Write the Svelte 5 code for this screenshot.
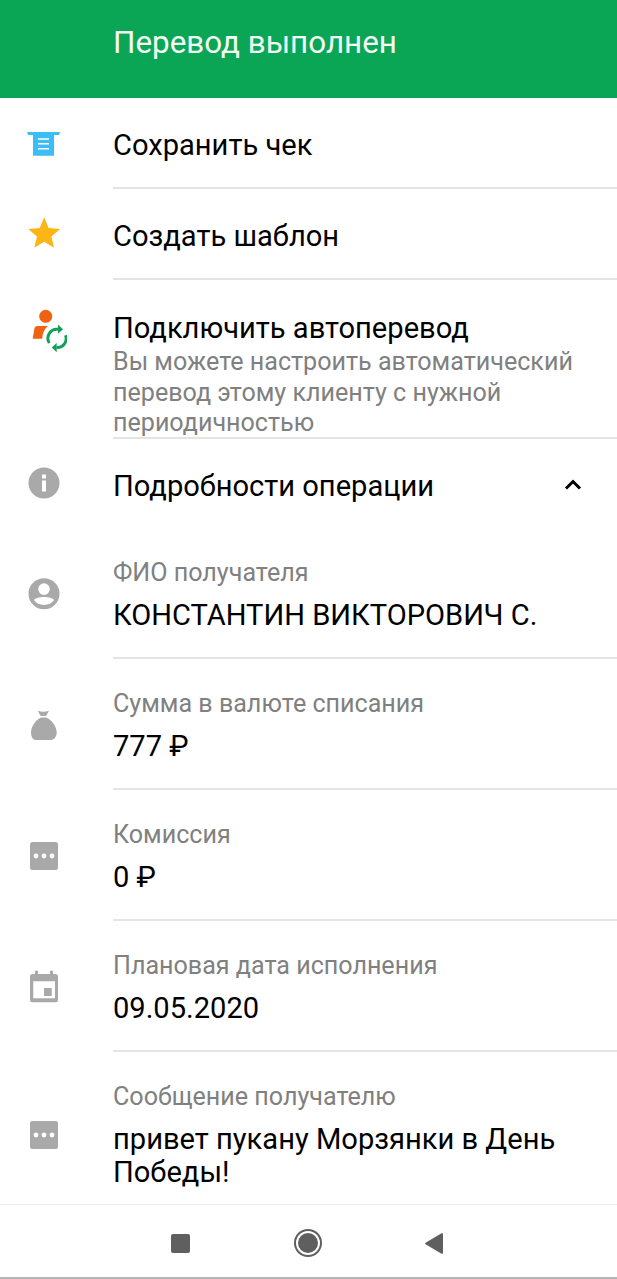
<script>
	const details = [
		{ label: 'ФИО получателя', value: 'КОНСТАНТИН ВИКТОРОВИЧ С.', icon: 'person' },
		{ label: 'Сумма в валюте списания', value: '777 ₽', icon: 'bag' },
		{ label: 'Комиссия', value: '0 ₽', icon: 'dots' },
		{ label: 'Плановая дата исполнения', value: '09.05.2020', icon: 'calendar' },
		{ label: 'Сообщение получателю', value: 'привет пукану Морзянки в День Победы!', icon: 'dots' }
	];
</script>

{#snippet icon(name)}
	<svg class="icon" viewBox="0 0 36 36" width="36" height="36" aria-hidden="true">
		{#if name === 'person'}
			<path fill="#a9a9a9" fill-rule="evenodd" d="M18 2.300a15.500 15.500 0 1 0 0 31 15.500 15.500 0 0 0 0-31zM18 7.300a5.800 5.800 0 1 1 0 11.600 5.800 5.800 0 0 1 0-11.600zM18 21c4.600 0 8.700 1.100 10.200 3.100C26 27.300 22.300 29 18 29S10 27.300 7.800 24.100C9.300 22.100 13.400 21 18 21z" />
		{:else if name === 'bag'}
			<path fill="#a9a9a9" d="M11.700 3.700q5.600 2 11.300 0l-3 5.300h-5.300zM15 10.500h5c6 2.500 10.700 9 10.700 15 0 5-3.500 7.500-6 7.500h-14.700c-2.500 0-5-2.500-5-7.500 0-6 4.700-12.500 10-15z" />
		{:else if name === 'dots'}
			<rect x="4" y="4" width="28" height="28" rx="2.500" fill="#a9a9a9" />
			<circle cx="10" cy="18" r="2.400" fill="#fff" />
			<circle cx="18" cy="18" r="2.400" fill="#fff" />
			<circle cx="26" cy="18" r="2.400" fill="#fff" />
		{:else if name === 'calendar'}
			<path fill="#a9a9a9" fill-rule="evenodd" d="M9 1.700h3V5h12V1.700h3V5h2.500A2.500 2.500 0 0 1 32 7.500v23.300a2.500 2.500 0 0 1-2.500 2.500h-23A2.500 2.500 0 0 1 4 30.800V7.500A2.500 2.500 0 0 1 6.500 5H9zM7.300 12.300v17h21.700v-17z" />
			<rect x="18" y="19" width="7.700" height="8" fill="#a9a9a9" />
		{/if}
	</svg>
{/snippet}

<div class="screen">
	<header class="topbar">Перевод выполнен</header>

	<main class="content">
		<div class="row action">
			<div class="slot">
				<svg class="icon" viewBox="0 0 36 36" width="36" height="36" aria-hidden="true">
					<path fill="#3dbdf5" d="M1 6h33l-1 3h-5v20.700H7V9H2z" />
					<path stroke="#fff" stroke-width="1.500" d="M12 13h11M12 17.700h11M12 22.700h11" />
				</svg>
			</div>
			<div class="body line"><span class="title">Сохранить чек</span></div>
		</div>

		<div class="row action">
			<div class="slot">
				<svg class="icon" viewBox="0 0 36 36" width="36" height="36" aria-hidden="true">
					<path fill="#fbb615" transform="translate(-0.900 -2.900) scale(1.590 1.600)" d="M12 17.270 18.180 21l-1.640-7.030L22 9.240l-7.190-.61L12 2 9.190 8.630 2 9.240l5.460 4.730L5.820 21z" />
				</svg>
			</div>
			<div class="body line"><span class="title">Создать шаблон</span></div>
		</div>

		<div class="row auto">
			<div class="slot">
				<svg class="icon" viewBox="0 0 46 44" width="46" height="44" aria-hidden="true">
					<circle cx="24.700" cy="7.300" r="6.500" fill="#ef6214" />
					<path fill="#ef6214" d="M13.500 19c.5-1.300 1.500-2 3-2h10.500c-3.500 2.500-5.500 7-5.800 12.700h-9.500z" />
					<path fill="none" stroke="#14a05a" stroke-width="3" d="M28.300 34A9 9 0 0 1 37 20.300M44.500 26.300A9 9 0 0 1 35.700 38.600" />
					<path fill="#14a05a" d="M37 15.600l5 4.700-5 4.500zM35.700 34l-5 4.600 5 4.600z" />
				</svg>
			</div>
			<div class="body line">
				<span class="title">Подключить автоперевод</span>
				<p class="hint">Вы можете настроить автоматический перевод этому клиенту с нужной периодичностью</p>
			</div>
		</div>

		<div class="row summary">
			<div class="slot">
				<svg class="icon" viewBox="0 0 36 36" width="36" height="36" aria-hidden="true">
					<circle cx="18" cy="18" r="15.500" fill="#a9a9a9" />
					<rect x="16" y="9.500" width="4" height="4" fill="#fff" />
					<rect x="16" y="15.500" width="4" height="11" fill="#fff" />
				</svg>
			</div>
			<div class="body">
				<span class="title">Подробности операции</span>
				<svg class="chevron" viewBox="0 0 18 12" width="18" height="12" aria-hidden="true">
					<path fill="none" stroke="#000" stroke-width="3" d="M2 10.500l7-7 7 7" />
				</svg>
			</div>
		</div>

		{#each details as item, i}
			<div class="row detail">
				<div class="slot">{@render icon(item.icon)}</div>
				<div class="body" class:line={i < details.length - 1} class:tall={i === details.length - 1}>
					<span class="label">{item.label}</span>
					<span class="value">{item.value}</span>
				</div>
			</div>
		{/each}
	</main>

	<nav class="navbar">
		<span class="nav-square"></span>
		<span class="nav-circle"></span>
		<svg viewBox="0 0 18 21" width="18" height="21" aria-hidden="true">
			<path fill="#5f5f5f" d="M18 1.200v18.600a1 1 0 0 1-1.500.9L.6 11.300a1 1 0 0 1 0-1.600L16.500.3a1 1 0 0 1 1.500.9z" />
		</svg>
	</nav>
</div>

<style>
	:global(body) {
		margin: 0;
		background: #fff;
	}

	.screen {
		width: 617px;
		height: 1279px;
		display: flex;
		flex-direction: column;
		overflow: hidden;
		font-family: Roboto, 'Liberation Sans', sans-serif;
		color: #000;
	}

	.topbar {
		height: 98px;
		flex-shrink: 0;
		box-sizing: border-box;
		padding: 21px 0 0 113px;
		background: #0aa655;
		color: #f2fbf6;
		font-size: 31.400px;
		line-height: 44px;
	}

	.content {
		flex: 1;
		min-height: 0;
		overflow: hidden;
	}

	.row {
		display: flex;
	}

	.slot {
		width: 113px;
		flex-shrink: 0;
		display: flex;
		justify-content: center;
		padding-right: 25px;
		box-sizing: border-box;
	}

	.icon {
		flex-shrink: 0;
	}

	.body {
		flex: 1;
		min-width: 0;
		box-sizing: border-box;
	}

	.line {
		border-bottom: 2px solid #e4e4e4;
	}

	.title {
		display: block;
		font-size: 29.100px;
		line-height: 36px;
	}

	.action .slot {
		padding-top: 28px;
	}

	.action .body {
		height: 91px;
		padding-top: 29px;
	}

	.auto .slot {
		padding-top: 29px;
	}

	.auto .body {
		height: 159px;
		padding: 30px 30px 0 0;
	}

	.hint {
		margin: 1px 0 0;
		font-size: 25.100px;
		line-height: 30.500px;
		color: #808080;
	}

	.summary {
		height: 89px;
	}

	.summary .slot {
		padding-top: 26px;
	}

	.summary .body {
		display: flex;
		justify-content: space-between;
		padding: 29px 35px 0 0;
	}

	.chevron {
		margin-top: 10px;
	}

	.detail {
		align-items: center;
	}

	.detail .body {
		height: 131px;
		padding: 29px 30px 0 0;
	}

	.detail .body.tall {
		height: 166px;
	}

	.label {
		display: block;
		font-size: 25.100px;
		line-height: 32px;
		color: #808080;
	}

	.value {
		display: block;
		margin-top: 10px;
		font-size: 29.100px;
		line-height: 33px;
	}

	.navbar {
		height: 75px;
		flex-shrink: 0;
		box-sizing: border-box;
		display: flex;
		align-items: center;
		justify-content: space-between;
		padding: 4px 174px 0 171px;
		background: #fff;
		border-top: 1px solid #eee;
		border-bottom: 2px solid #b5b5b5;
	}

	.nav-square {
		width: 19px;
		height: 19px;
		border-radius: 2px;
		background: #5f5f5f;
	}

	.nav-circle {
		width: 20px;
		height: 20px;
		border-radius: 50%;
		background: #5f5f5f;
		border: 2px solid #fff;
		box-shadow: 0 0 0 2px #5f5f5f;
	}
</style>
